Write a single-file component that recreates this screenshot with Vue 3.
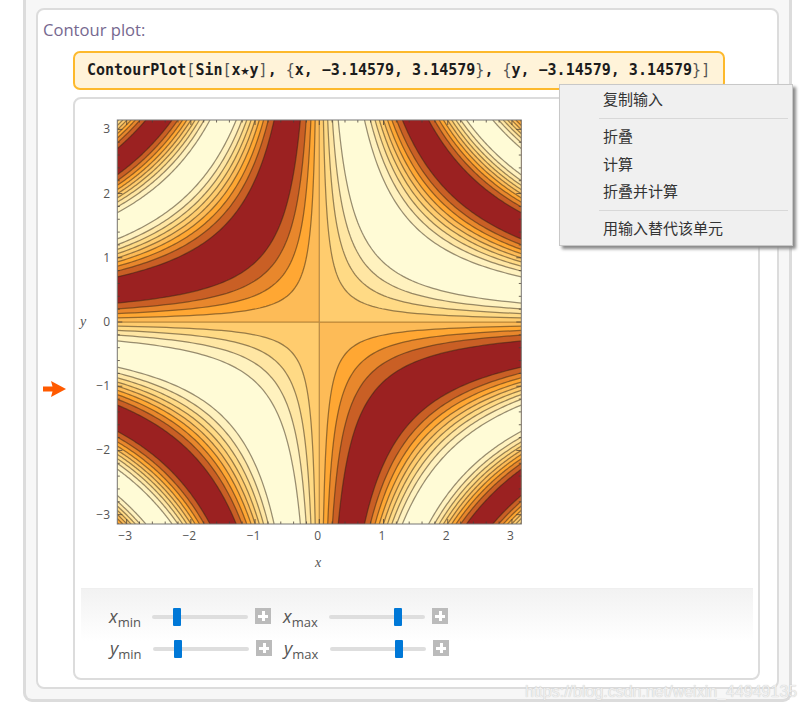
<template>
  <div class="page">
    <div class="outer">
      <div class="card">
        <div class="title">Contour plot:</div>
        <div class="input">
          <span>ContourPlot</span><span class="br">[</span><span>Sin</span><span class="br">[</span><span>x</span><span class="star">★</span><span>y</span><span class="br">]</span><span>, </span><span class="br">{</span><span>x, −3.14579, 3.14579</span><span class="br">}</span><span>, </span><span class="br">{</span><span>y, −3.14579, 3.14579</span><span class="br">}</span><span class="br">]</span>
        </div>
        <svg class="arrow" width="23" height="16" viewBox="0 0 23 16">
          <path d="M0 5.5H9.5L8 0L23 8L8 16L9.5 10.5H0Z" fill="#ff5a00" />
        </svg>
        <div class="output">
          <svg class="plot" width="460" height="489" viewBox="0 0 460 489">
            <defs>
              <clipPath id="frame">
                <rect :x="cx - half" :y="cy - half" :width="half * 2" :height="half * 2" />
              </clipPath>
            </defs>
            <g clip-path="url(#frame)">
              <path v-for="(band, index) in bands" :key="index" :d="band.d" :fill="band.color" />
              <path v-for="(line, index) in lines" :key="index" :d="line" class="contour" />
              <path :d="axes" class="axis" />
            </g>
            <path :d="ticks" class="tick" />
            <rect :x="cx - half" :y="cy - half" :width="half * 2" :height="half * 2" class="box" />
            <text
              v-for="n in tickNumbers"
              :key="'x' + n"
              class="num"
              text-anchor="middle"
              :x="cx + n * scale - 1.5"
              y="441"
            >{{ formatTick(n) }}</text>
            <text
              v-for="n in tickNumbers"
              :key="'y' + n"
              class="num"
              text-anchor="end"
              x="35"
              :y="cy - n * scale + 4"
            >{{ formatTick(n) }}</text>
            <text class="var" x="5" y="227">y</text>
            <text class="var" x="240" y="468">x</text>
          </svg>
          <div class="controls">
            <div v-for="(row, r) in controlRows" :key="r" class="row" :class="{ 'row-two': r === 1 }">
              <div v-for="c in row" :key="c.name" class="control">
                <span class="label" :class="{ wide: c.sub === 'max' }"><i>{{ c.name }}</i><sub>{{ c.sub }}</sub></span>
                <span class="track"><span class="thumb" :style="{ left: c.thumb + 'px' }"></span></span>
                <span class="plus"></span>
              </div>
            </div>
          </div>
        </div>
      </div>
    </div>

    <div class="menu">
      <div class="item">复制输入</div>
      <div class="sep"></div>
      <div class="item">折叠</div>
      <div class="item">计算</div>
      <div class="item">折叠并计算</div>
      <div class="sep"></div>
      <div class="item">用输入替代该单元</div>
    </div>

    <div class="watermark">https://blog.csdn.net/weixin_44949135</div>
  </div>
</template>

<script setup>
const cx = 244.3;
const cy = 223;
const half = 202;
const R = 3.14579;
const scale = half / R;

const tickNumbers = [-3, -2, -1, 0, 1, 2, 3];
const formatTick = (n) => (n < 0 ? "−" + -n : String(n));

// one colour per band of sin(x y), levels every 0.2
const colors = [
  "#9b2121", "#c95f25", "#e8872c", "#ffa733", "#fdbb57",
  "#ffcc6e", "#ffda85", "#ffe6a3", "#fff2bf", "#fffbd6"
];
const bandOf = (v) => Math.min(9, Math.max(0, Math.floor((v + 1) / 0.2)));

function curve(c, sx, sy) {
  const pts = [];
  const start = c / R;
  for (let i = 0; i <= 70; i++) {
    const x = start * Math.pow(R / start, i / 70);
    const y = c / x;
    pts.push(`${(cx + sx * x * scale).toFixed(2)} ${(cy - sy * y * scale).toFixed(2)}`);
  }
  return pts;
}

const bands = [];
const lines = [];
for (const [sx, sy] of [[1, 1], [-1, -1], [-1, 1], [1, -1]]) {
  const sign = sx * sy;
  let current = bandOf(sign * 0.0005);
  const cornerX = cx + sx * half;
  const cornerY = cy - sy * half;
  bands.push({
    d: `M${cx} ${cy}L${cornerX} ${cy}L${cornerX} ${cornerY}L${cx} ${cornerY}Z`,
    color: colors[current]
  });
  for (let c = 0.002; c < R * R; c += 0.001) {
    const next = bandOf(Math.sin(sign * c));
    if (next !== current) {
      const pts = curve(c, sx, sy);
      bands.push({ d: `M${pts.join("L")}L${cornerX} ${cornerY}Z`, color: colors[next] });
      lines.push(`M${pts.join("L")}`);
      current = next;
    }
  }
}

const axes = `M${cx - half} ${cy}H${cx + half}M${cx} ${cy - half}V${cy + half}`;

let tickPath = "";
for (let i = -15; i <= 15; i++) {
  const p = i * 0.2 * scale;
  const len = i % 5 === 0 ? 5 : 2.5;
  tickPath += `M${cx + p} ${cy + half}v${-len}M${cx + p} ${cy - half}v${len}`;
  tickPath += `M${cx - half} ${cy - p}h${len}M${cx + half} ${cy - p}h${-len}`;
}
const ticks = tickPath;

const controlRows = [
  [
    { name: "x", sub: "min", thumb: 21 },
    { name: "x", sub: "max", thumb: 65 }
  ],
  [
    { name: "y", sub: "min", thumb: 21 },
    { name: "y", sub: "max", thumb: 65 }
  ]
];
</script>

<style>
html,
body {
  margin: 0;
  background: #fff;
}
</style>

<style scoped>
.page {
  position: relative;
  width: 807px;
  height: 711px;
  overflow: hidden;
  background: #fff;
  font-family: "Open Sans", "Noto Sans", sans-serif;
}

.outer {
  box-sizing: border-box;
  display: flex;
  margin-left: 23px;
  width: 769px;
  height: 702px;
  padding: 8px 10px 10px;
  background: #f7f7f7;
  border: 3px solid #dcdcdc;
  border-top: none;
  border-radius: 0 0 9px 9px;
}

.card {
  position: relative;
  flex: 1;
  background: #fff;
  border: 2px solid #dcdcdc;
  border-radius: 8px;
}

.title {
  margin: 8px 0 9px 5px;
  font-size: 16.6px;
  line-height: 24px;
  color: #76688f;
}

.input {
  box-sizing: border-box;
  margin-left: 35px;
  width: 652px;
  height: 39px;
  padding-left: 12px;
  background: #fff3d9;
  border: 2px solid #fdb92c;
  border-radius: 7px;
  font-family: "DejaVu Sans Mono", "Liberation Mono", monospace;
  font-size: 15px;
  font-weight: 700;
  line-height: 35px;
  white-space: pre;
  color: #1c1c1c;
}

.input .br {
  font-weight: 400;
  color: #555;
}

.arrow {
  position: absolute;
  left: 5px;
  top: 371px;
}

.output {
  box-sizing: border-box;
  margin: 7px 0 0 35px;
  width: 687px;
  height: 583px;
  border: 2px solid #dcdcdc;
  border-radius: 8px;
  background: #fff;
}

.plot {
  display: block;
}

.contour {
  fill: none;
  stroke: rgba(50, 35, 20, 0.5);
  stroke-width: 1.25;
}

.axis {
  fill: none;
  stroke: rgba(130, 85, 25, 0.55);
  stroke-width: 1.25;
}

.tick {
  fill: none;
  stroke: #4a4036;
  stroke-width: 0.8;
}

.box {
  fill: none;
  stroke: #777;
  stroke-width: 1;
}

.num {
  font-family: "Open Sans", sans-serif;
  font-size: 12px;
  fill: #555;
}

.var {
  font-family: "Liberation Serif", serif;
  font-style: italic;
  font-size: 14px;
  fill: #555;
}

.controls {
  margin: 0 5px 0 6px;
  height: 90px;
  padding: 19px 0 0 28px;
  box-sizing: border-box;
  background: linear-gradient(#f2f2f2, #fff 52px);
  border-top: 1px solid #efefef;
}

.row {
  display: flex;
  height: 18px;
  margin-bottom: 14px;
}

.row-two {
  margin-left: 1px;
}

.control {
  display: flex;
  align-items: center;
  margin-right: 12px;
}

.label {
  width: 43px;
  font-size: 13px;
  line-height: 18px;
  color: #555;
}

.label.wide {
  width: 46px;
}

.label i {
  font-size: 18px;
}

.label sub {
  font-size: 13px;
  line-height: 0;
}

.track {
  position: relative;
  width: 96px;
  height: 4px;
  background: #dedede;
  border-radius: 2px;
}

.thumb {
  position: absolute;
  top: -7px;
  width: 8px;
  height: 18px;
  background: #0078d7;
  border-radius: 1px;
}

.plus {
  position: relative;
  align-self: flex-start;
  width: 16px;
  height: 16px;
  margin-left: 7px;
  background: linear-gradient(#fff, #fff) center / 10px 3px no-repeat,
    linear-gradient(#fff, #fff) center / 3px 10px no-repeat,
    #bbb;
}

.menu {
  position: absolute;
  left: 559px;
  top: 84px;
  box-sizing: border-box;
  width: 234px;
  height: 162px;
  padding: 0 4px 0 39px;
  background: #f0f0f0;
  border: 1px solid #c8c8c8;
  box-shadow: 3px 3px 3px #8a8a8a;
  font-family: "Noto Sans CJK SC", sans-serif;
  font-size: 15px;
  color: #333;
}

.item {
  height: 27.5px;
  padding-left: 4px;
  line-height: 27.5px;
}

.sep {
  height: 1px;
  margin: 5.5px 0 3px;
  background: #d8d8d8;
}

.watermark {
  position: absolute;
  left: 525px;
  top: 683px;
  font-family: "Liberation Sans", sans-serif;
  font-size: 16px;
  line-height: 18px;
  color: #efefef;
  text-shadow: 0 0 1px #bbb;
}
</style>
